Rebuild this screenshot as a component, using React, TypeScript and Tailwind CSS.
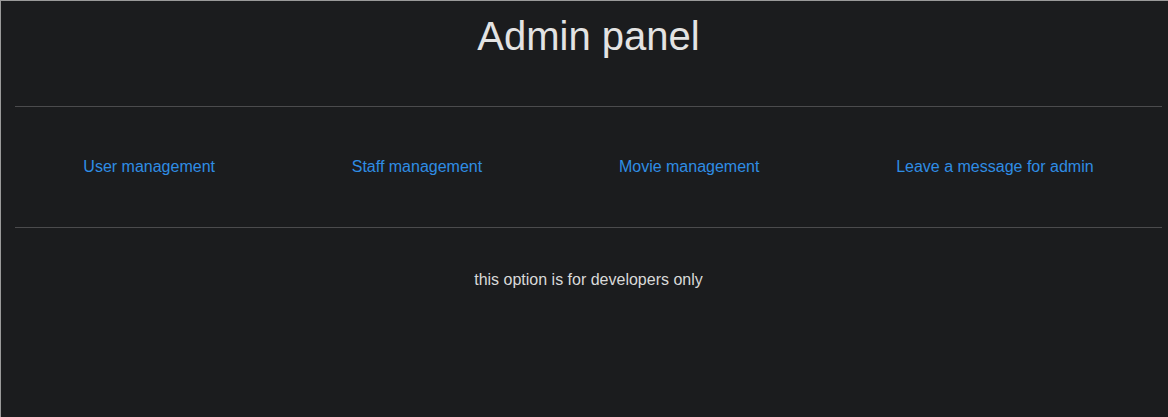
export default function App() {
  const links = ['User management', 'Staff management', 'Movie management', 'Leave a message for admin']

  return (
    <div
      className="w-[1168px] h-[417px] bg-[#1b1c1e] border-t border-l border-[#9a9a9a] overflow-hidden"
      style={{ fontFamily: '"Liberation Sans", Arial, sans-serif' }}
    >
      <div className="ml-[14px] mr-[6px] flex flex-col">
        <h1 className="pt-[12px] text-center text-[40px] leading-[46px] text-[#e3e3e3]">Admin panel</h1>

        <hr className="mt-[47px] border-0 border-t border-[#4b4b4d]" />

        <nav className="mt-[51px] flex justify-around">
          {links.map((label) => (
            <a key={label} href="#" className="text-base leading-[18px] text-[#2f8de4]">
              {label}
            </a>
          ))}
        </nav>

        <hr className="mt-[51px] border-0 border-t border-[#4b4b4d]" />

        <p className="mt-[43px] text-center text-base leading-[18px] text-[#d9d9d9]">
          this option is for developers only
        </p>
      </div>
    </div>
  )
}
